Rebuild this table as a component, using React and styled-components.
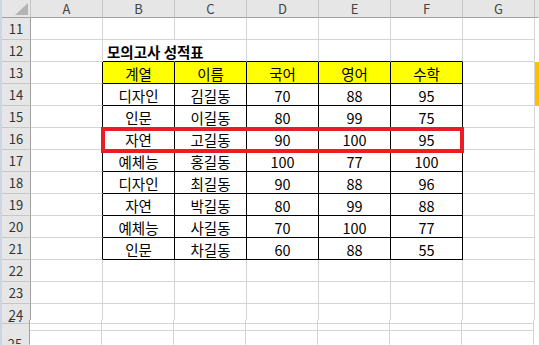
import styled, { createGlobalStyle } from 'styled-components';

const GlobalStyle = createGlobalStyle`
  html, body {
    margin: 0;
    padding: 0;
    background: #ffffff;
    overflow: hidden;
  }
  body {
    font-family: 'Noto Sans CJK KR', 'Noto Sans', sans-serif;
  }
`;

const COLS = ['A', 'B', 'C', 'D', 'E', 'F', 'G'];
const HEAD = ['계열', '이름', '국어', '영어', '수학'];
const DATA = [
  ['디자인', '김길동', 70, 88, 95],
  ['인문', '이길동', 80, 99, 75],
  ['자연', '고길동', 90, 100, 95],
  ['예체능', '홍길동', 100, 77, 100],
  ['디자인', '최길동', 90, 88, 96],
  ['자연', '박길동', 80, 99, 88],
  ['예체능', '사길동', 70, 100, 77],
  ['인문', '차길동', 60, 88, 55],
];

const GRID = '#d4d4d4';
const INK = '#000000';

const Window = styled.div`
  position: relative;
  width: 539px;
  height: 345px;
  overflow: hidden;
  box-sizing: border-box;
  border-left: 2px solid #cdd5e4;
`;

const Upper = styled.div`
  height: 320px;
  overflow: hidden;
`;

const Grid = styled.div`
  display: grid;
  grid-template-columns: 29px repeat(7, 72px) 4px;
  grid-template-rows: 18px;
  grid-auto-rows: 22px;
`;

const Lower = styled(Grid)`
  margin-left: -1px;
  grid-template-rows: 4px 7px 14px;
`;

const ColHead = styled.div`
  box-sizing: border-box;
  background: #e6e6e6;
  border-right: 1px solid ${p => (p.$edge ? 'transparent' : '#c6c6c6')};
  border-bottom: 1px solid #a0a0a0;
  display: flex;
  align-items: center;
  justify-content: center;
  font-size: 13px;
  color: #444444;
  position: relative;
`;

const Corner = styled.svg`
  position: absolute;
  left: 13px;
  top: 3px;
`;

const RowHead = styled.div`
  box-sizing: border-box;
  background: #e6e6e6;
  border-right: 1px solid #a0a0a0;
  border-bottom: 1px solid ${p => (p.$open ? 'transparent' : '#c6c6c6')};
  display: flex;
  align-items: center;
  justify-content: center;
  font-size: 13px;
  color: #333333;
  overflow: hidden;
  line-height: 22px;
`;

const ClipHead = styled(RowHead)`
  align-items: flex-end;
  line-height: 12px;
`;

const TailHead = styled(RowHead)`
  grid-column: 1;
  grid-row: 2 / span 2;
  align-items: flex-start;
  padding-top: 9px;
`;

const Cell = styled.div`
  box-sizing: border-box;
  border-right: 1px solid ${p => p.$r || GRID};
  border-bottom: 1px solid ${p => p.$b || GRID};
  background: ${p => p.$bg || 'transparent'};
  display: flex;
  align-items: center;
  justify-content: ${p => (p.$left ? 'flex-start' : 'center')};
  padding: 2px 0 0 ${p => (p.$left ? 4 : 0)}px;
  font-size: 14.5px;
  font-weight: ${p => (p.$bold ? 700 : 400)};
  color: #000000;
  white-space: nowrap;
  min-width: 0;
`;

const Edge = styled.div`
  background: ${p => (p.$on ? '#ffc000' : '#ffffff')};
`;

const Highlight = styled.div`
  position: absolute;
  left: 99px;
  top: 127px;
  width: 363px;
  height: 26px;
  box-sizing: border-box;
  border: 4px solid #ed1c24;
  pointer-events: none;
`;

function rowCells(n) {
  const inTable = n >= 13 && n <= 21;
  return COLS.map((c, i) => {
    const key = `${c}${n}`;
    const tableCol = i >= 1 && i <= 5;
    let r;
    let b;
    if (inTable && (tableCol || i === 0)) r = INK;
    if (inTable && tableCol) b = INK;
    if (n === 12 && tableCol) b = INK;

    if (n === 12 && i === 1) {
      return (
        <Cell key={key} $r="transparent" $b={b} $left $bold>
          모의고사 성적표
        </Cell>
      );
    }
    if (n === 13 && tableCol) {
      return (
        <Cell key={key} $r={r} $b={b} $bg="#ffff00">
          {HEAD[i - 1]}
        </Cell>
      );
    }
    if (n >= 14 && n <= 21 && tableCol) {
      return (
        <Cell key={key} $r={r} $b={b}>
          {DATA[n - 14][i - 1]}
        </Cell>
      );
    }
    return <Cell key={key} $r={r} $b={b} />;
  });
}

const ROWS = [11, 12, 13, 14, 15, 16, 17, 18, 19, 20, 21, 22, 23, 24];

export default function App() {
  return (
    <>
      <GlobalStyle />
      <Window>
        <Upper>
          <Grid>
            <ColHead>
              <Corner width="13" height="12" viewBox="0 0 13 12">
                <polygon points="13,0 13,12 0,12" fill="#b4b4b4" />
              </Corner>
            </ColHead>
            {COLS.map(c => (
              <ColHead key={c}>{c}</ColHead>
            ))}
            <ColHead $edge />
            {ROWS.map(n => [
              <RowHead key={`h${n}`}>{n}</RowHead>,
              ...rowCells(n),
              <Edge key={`e${n}`} $on={n === 13 || n === 14} />,
            ])}
          </Grid>
        </Upper>
        <Lower>
          <ClipHead>24</ClipHead>
          <TailHead $open>25</TailHead>
          {COLS.map(c => (
            <Cell key={`l1${c}`} />
          ))}
          <Edge />
          {COLS.map(c => (
            <Cell key={`l2${c}`} />
          ))}
          <Edge />
          {COLS.map(c => (
            <Cell key={`l3${c}`} $b="transparent" />
          ))}
          <Edge />
        </Lower>
        <Highlight />
      </Window>
    </>
  );
}
